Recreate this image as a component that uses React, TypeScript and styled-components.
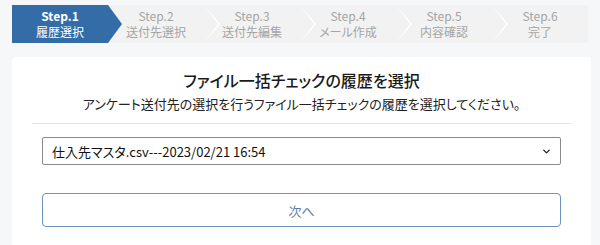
import React from "react";
import styled, { createGlobalStyle } from "styled-components";
import { ChevronDown } from "lucide-react";

const GlobalStyle = createGlobalStyle`
  html, body {
    margin: 0;
    padding: 0;
    background: #f6f7f8;
  }
  body {
    font-family: "Noto Sans CJK JP", "Noto Sans", sans-serif;
    font-feature-settings: "palt";
    color: #222;
  }
`;

const Page = styled.div`
  padding: 5px 9px 0 12px;
  display: flex;
  flex-direction: column;
  gap: 14px;
`;

const StepBar = styled.ol`
  display: flex;
  margin: 0;
  padding: 0;
  list-style: none;
  width: 576px;
  height: 38px;
  background: #f2f2f2;
`;

const Step = styled.li<{ $active?: boolean; $last?: boolean }>`
  position: relative;
  width: 96px;
  height: 38px;
  display: flex;
  flex-direction: column;
  align-items: center;
  justify-content: center;
  font-size: 12px;
  line-height: 16px;
  color: ${p => (p.$active ? "#fff" : "#a5a5a5")};
  background: ${p => (p.$active ? "#336ca6" : "#f2f2f2")};

  span:first-child {
    font-weight: ${p => (p.$active ? 600 : 400)};
  }

  &::before,
  &::after {
    content: "";
    display: ${p => (p.$last ? "none" : "block")};
    position: absolute;
    top: 0;
    height: 38px;
    clip-path: polygon(0 0, 100% 50%, 0 100%);
    z-index: 2;
  }
  &::before {
    right: -16px;
    width: 16px;
    background: ${p => (p.$active ? "transparent" : "#ffffff")};
  }
  &::after {
    right: -14px;
    width: 14px;
    background: ${p => (p.$active ? "#336ca6" : "#f2f2f2")};
  }
`;

const Card = styled.section`
  width: 579px;
  background: #fff;
  border-radius: 4px;
  padding: 10px 0 30px;
  box-sizing: border-box;
`;

const Header = styled.header`
  margin: 0 20px;
  padding-bottom: 8px;
  border-bottom: 1px solid #e4e4e4;
  text-align: center;
`;

const Title = styled.h1`
  margin: 0;
  font-size: 16px;
  line-height: 26px;
  font-weight: 500;
  color: #1a1a1a;
`;

const Lead = styled.p`
  margin: 0;
  font-size: 13px;
  line-height: 22px;
  color: #222;
`;

const Form = styled.form`
  margin: 13px 30px 0;
  display: flex;
  flex-direction: column;
  gap: 28px;
`;

const SelectWrap = styled.div`
  position: relative;
  height: 28px;

  svg {
    position: absolute;
    right: 9px;
    top: 9px;
    pointer-events: none;
  }
`;

const Select = styled.select`
  appearance: none;
  width: 100%;
  height: 28px;
  box-sizing: border-box;
  border: 1px solid #8a8a8a;
  border-radius: 2px;
  background: #fff;
  padding: 0 28px 0 9px;
  font-family: inherit;
  font-feature-settings: "palt";
  font-size: 13px;
  color: #111;
`;

const NextButton = styled.button`
  height: 34px;
  border: 1px solid #6d93ba;
  border-radius: 4px;
  background: #fff;
  font-family: inherit;
  font-size: 13px;
  color: #5b82ac;
  cursor: pointer;
`;

const steps = [
  { no: 1, label: "履歴選択" },
  { no: 2, label: "送付先選択" },
  { no: 3, label: "送付先編集" },
  { no: 4, label: "メール作成" },
  { no: 5, label: "内容確認" },
  { no: 6, label: "完了" },
];

export default function App() {
  return (
    <>
      <GlobalStyle />
      <Page>
        <StepBar>
          {steps.map((s, i) => (
            <Step key={s.no} $active={i === 0} $last={i === steps.length - 1}>
              <span>Step.{s.no}</span>
              <span>{s.label}</span>
            </Step>
          ))}
        </StepBar>
        <Card>
          <Header>
            <Title>ファイル一括チェックの履歴を選択</Title>
            <Lead>アンケート送付先の選択を行うファイル一括チェックの履歴を選択してください。</Lead>
          </Header>
          <Form onSubmit={e => e.preventDefault()}>
            <SelectWrap>
              <Select defaultValue="1">
                <option value="1">仕入先マスタ.csv---2023/02/21 16:54</option>
              </Select>
              <ChevronDown size={11} strokeWidth={3} color="#222" />
            </SelectWrap>
            <NextButton type="submit">次へ</NextButton>
          </Form>
        </Card>
      </Page>
    </>
  );
}
